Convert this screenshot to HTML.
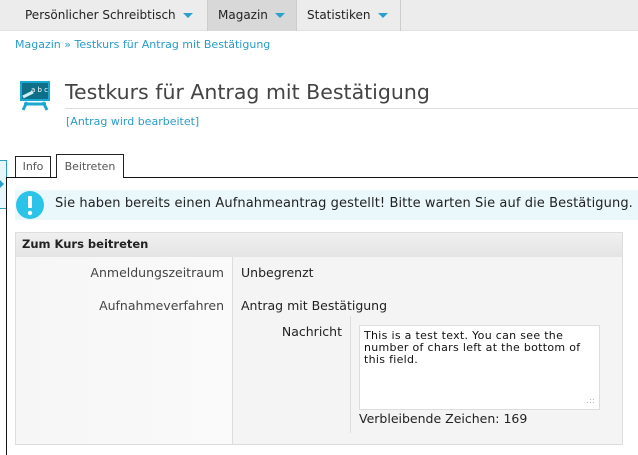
<!DOCTYPE html>
<html><head><meta charset="utf-8"><style>
*{margin:0;padding:0;box-sizing:border-box}
body{width:638px;height:455px;overflow:hidden;background:#fff;font-family:"DejaVu Sans",sans-serif;color:#222;position:relative}
.abs{position:absolute}
.nav{left:0;top:0;width:638px;height:31px;background:#ececec;border-bottom:1px solid #e2e2e2}
.ni{top:0;height:31px;line-height:30px;font-size:12px;color:#222}
.arr{display:inline-block;width:0;height:0;border-left:5px solid transparent;border-right:5px solid transparent;border-top:5px solid #2aa0cf;vertical-align:middle;margin-left:7px}
.link{color:#2a9cc8}
</style></head><body>
<div class="abs nav"></div>
<div class="abs ni" style="left:25px">Persönlicher Schreibtisch<span class="arr"></span></div>
<div class="abs ni" style="left:207px;width:90px;background:#d8d8d8;border-left:1px solid #ccc;border-right:1px solid #ccc;padding-left:10px">Magazin<span class="arr"></span></div>
<div class="abs ni" style="left:297px;width:104px;border-right:1px solid #ccc;padding-left:10px">Statistiken<span class="arr"></span></div>
<div class="abs link" style="left:15px;top:38px;font-size:11px">Magazin » Testkurs für Antrag mit Bestätigung</div>
<svg class="abs" style="left:18px;top:80px" width="34" height="32" viewBox="0 0 34 32">
<rect x="3" y="2" width="28" height="18" fill="#0f6f88" stroke="#18a9d0" stroke-width="2"/>
<text x="13" y="12" font-size="7" fill="#fff" font-family="DejaVu Sans">a b c</text>
<line x1="5" y1="17" x2="15" y2="12" stroke="#cfeff8" stroke-width="3"/>
<path d="M9 22 L5 30 M25 22 L29 30 M6 24 H28" stroke="#1aa8d0" stroke-width="3" fill="none"/>
</svg>
<div class="abs" style="left:65px;top:80px;font-size:20.5px;color:#444;white-space:nowrap">Testkurs für Antrag mit Bestätigung</div>
<div class="abs" style="left:65px;top:108px;width:573px;height:1px;background:#ddd"></div>
<div class="abs link" style="left:66px;top:115px;font-size:11px">[Antrag wird bearbeitet]</div>
<div class="abs" style="left:0;top:160px;width:7px;height:49px;background:#e6f6fb;border:1px solid #2aa0c8;border-left:none"></div>
<div class="abs" style="left:0;top:180px;width:0;height:0;border-top:4px solid transparent;border-bottom:4px solid transparent;border-left:4px solid #2aa0c8"></div>
<div class="abs" style="left:6px;top:177px;width:1px;height:278px;background:#111"></div>
<div class="abs" style="left:15px;top:156px;width:36px;height:22px;border:1px solid #222;border-bottom:none;font-size:11px;color:#555;text-align:center;line-height:20px">Info</div>
<div class="abs" style="left:56px;top:154px;width:68px;height:24px;border:1px solid #222;border-bottom:none;background:#fff;font-size:11px;color:#555;text-align:center;line-height:24px;z-index:2">Beitreten</div>
<div class="abs" style="left:6px;top:177px;width:632px;height:1px;background:#111"></div>
<div class="abs" style="left:15px;top:190px;width:623px;height:30px;background:#eaf8fc"></div>
<svg class="abs" style="left:15px;top:190px" width="32" height="30"><circle cx="15" cy="15" r="14" fill="#2cc3e8"/><rect x="13" y="6" width="4" height="12" rx="1" fill="#fff"/><circle cx="15" cy="23" r="2.2" fill="#fff"/></svg>
<div class="abs" style="left:55px;top:196px;font-size:13px;color:#222;white-space:nowrap;letter-spacing:0.1px">Sie haben bereits einen Aufnahmeantrag gestellt! Bitte warten Sie auf die Bestätigung.</div>
<div class="abs" style="left:15px;top:232px;width:608px;height:213px;border:1px solid #ddd;background:#f4f4f4"></div>
<div class="abs" style="left:16px;top:233px;width:606px;height:24px;background:linear-gradient(#f0f0f0,#e4e4e4)"></div>
<div class="abs" style="left:22px;top:237px;font-size:11.5px;font-weight:bold;color:#222">Zum Kurs beitreten</div>
<div class="abs" style="left:232px;top:257px;width:1px;height:187px;background:#ddd"></div>
<div class="abs" style="left:16px;top:257px;width:216px;height:187px;background:linear-gradient(90deg,#f6f6f6,#fafafa)"></div>
<div class="abs" style="left:16px;top:265px;width:208px;text-align:right;font-size:12.5px;color:#444">Anmeldungszeitraum</div>
<div class="abs" style="left:241px;top:265px;font-size:12.5px">Unbegrenzt</div>
<div class="abs" style="left:16px;top:298px;width:208px;text-align:right;font-size:12.5px;color:#444">Aufnahmeverfahren</div>
<div class="abs" style="left:241px;top:298px;font-size:12.5px">Antrag mit Bestätigung</div>
<div class="abs" style="left:350px;top:316px;width:1px;height:117px;background:#ddd"></div>
<div class="abs" style="left:240px;top:324px;width:102px;text-align:right;font-size:12.5px">Nachricht</div>
<div class="abs" style="left:359px;top:325px;width:241px;height:85px;background:#fff;border:1px solid #ddd;padding:4px 4px;font-size:11px;letter-spacing:0.3px;line-height:12px;color:#111;white-space:nowrap">This is a test text. You can see the<br>number of chars left at the bottom of<br>this field.<span style="position:absolute;right:4px;bottom:2px;color:#aaa;font-size:8px">.::</span></div>
<div class="abs" style="left:359px;top:411px;font-size:12.5px">Verbleibende Zeichen: 169</div>
</body></html>
